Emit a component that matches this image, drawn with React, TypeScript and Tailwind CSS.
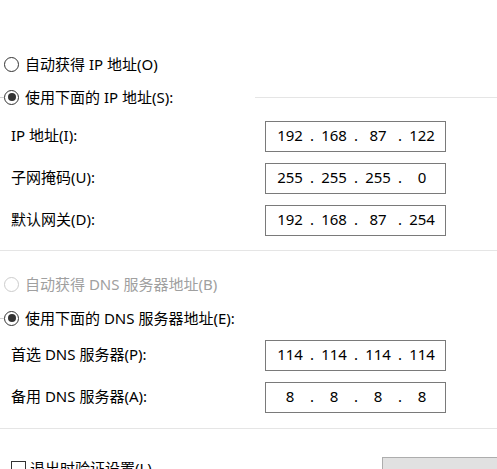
import React from "react";

const font = { fontFamily: '"Noto Sans", "Noto Sans CJK SC", sans-serif' };

function Radio({ checked, disabled }: { checked?: boolean; disabled?: boolean }) {
  return (
    <span
      className={`flex h-[15px] w-[15px] shrink-0 items-center justify-center rounded-full border bg-white ${
        disabled ? "border-[#cccccc]" : "border-[#333333]"
      }`}
    >
      {checked && <span className="h-[8px] w-[8px] rounded-full bg-[#333333]" />}
    </span>
  );
}

function RadioRow({
  label,
  checked,
  disabled,
  groupLine,
  rightLine,
  className,
}: {
  label: string;
  checked?: boolean;
  disabled?: boolean;
  groupLine?: boolean;
  rightLine?: boolean;
  className?: string;
}) {
  return (
    <div className={`flex h-6 items-center ${className ?? ""}`}>
      <span className={`h-px w-1 shrink-0 ${groupLine ? "bg-[#cfcfcf]" : ""}`} />
      <Radio checked={checked} disabled={disabled} />
      <span className={`ml-[6px] ${disabled ? "text-[#a0a0a0]" : "text-black"}`}>{label}</span>
      {rightLine && <span className="ml-auto h-px w-[242px] bg-[#e5e5e5]" />}
    </div>
  );
}

function IpBox({ parts }: { parts: string[] }) {
  return (
    <div className="flex h-[31px] w-[181px] shrink-0 items-center border border-[#7a7a7a] bg-white pl-[6px] pb-[3px]">
      {parts.map((p, i) => (
        <React.Fragment key={i}>
          <span className="w-[36px] text-center">{p}</span>
          {i < 3 && <span className="w-[8px] text-center">.</span>}
        </React.Fragment>
      ))}
    </div>
  );
}

function FieldRow({ label, parts, className }: { label: string; parts: string[]; className?: string }) {
  return (
    <div className={`flex items-center pl-[11px] ${className ?? ""}`}>
      <span className="w-[254px] shrink-0 pb-[3px]">{label}</span>
      <IpBox parts={parts} />
    </div>
  );
}

export default function App() {
  return (
    <div
      className="h-[469px] w-[497px] overflow-hidden bg-white text-[15px] leading-none text-black"
      style={font}
    >
      <div className="pt-[52px]">
        <RadioRow label="自动获得 IP 地址(O)" />
        <RadioRow label="使用下面的 IP 地址(S):" checked groupLine rightLine className="mt-[9px]" />

        <FieldRow label="IP 地址(I):" parts={["192", "168", "87", "122"]} className="mt-[12px]" />
        <FieldRow label="子网掩码(U):" parts={["255", "255", "255", "0"]} className="mt-[11px]" />
        <FieldRow label="默认网关(D):" parts={["192", "168", "87", "254"]} className="mt-[11px]" />

        <div className="mt-[14px] h-px bg-[#e5e5e5]" />

        <RadioRow label="自动获得 DNS 服务器地址(B)" disabled className="mt-[21px]" />
        <RadioRow label="使用下面的 DNS 服务器地址(E):" checked groupLine className="mt-[10px]" />

        <FieldRow label="首选 DNS 服务器(P):" parts={["114", "114", "114", "114"]} className="mt-[10px]" />
        <FieldRow label="备用 DNS 服务器(A):" parts={["8", "8", "8", "8"]} className="mt-[11px]" />

        <div className="mt-[15px] h-px bg-[#e5e5e5]" />

        <div className="mt-[28px] flex items-start">
          <div className="flex w-[382px] shrink-0 items-center pl-[11px] pt-[4px]">
            <span className="h-[15px] w-[15px] shrink-0 border border-[#333333] bg-white" />
            <span className="ml-[4px]">退出时验证设置(L)</span>
          </div>
          <button className="flex h-[30px] w-[150px] shrink-0 items-center justify-center border border-[#adadad] bg-[#e1e1e1] pt-[14px]">
            高级(V)...
          </button>
        </div>
      </div>
    </div>
  );
}
